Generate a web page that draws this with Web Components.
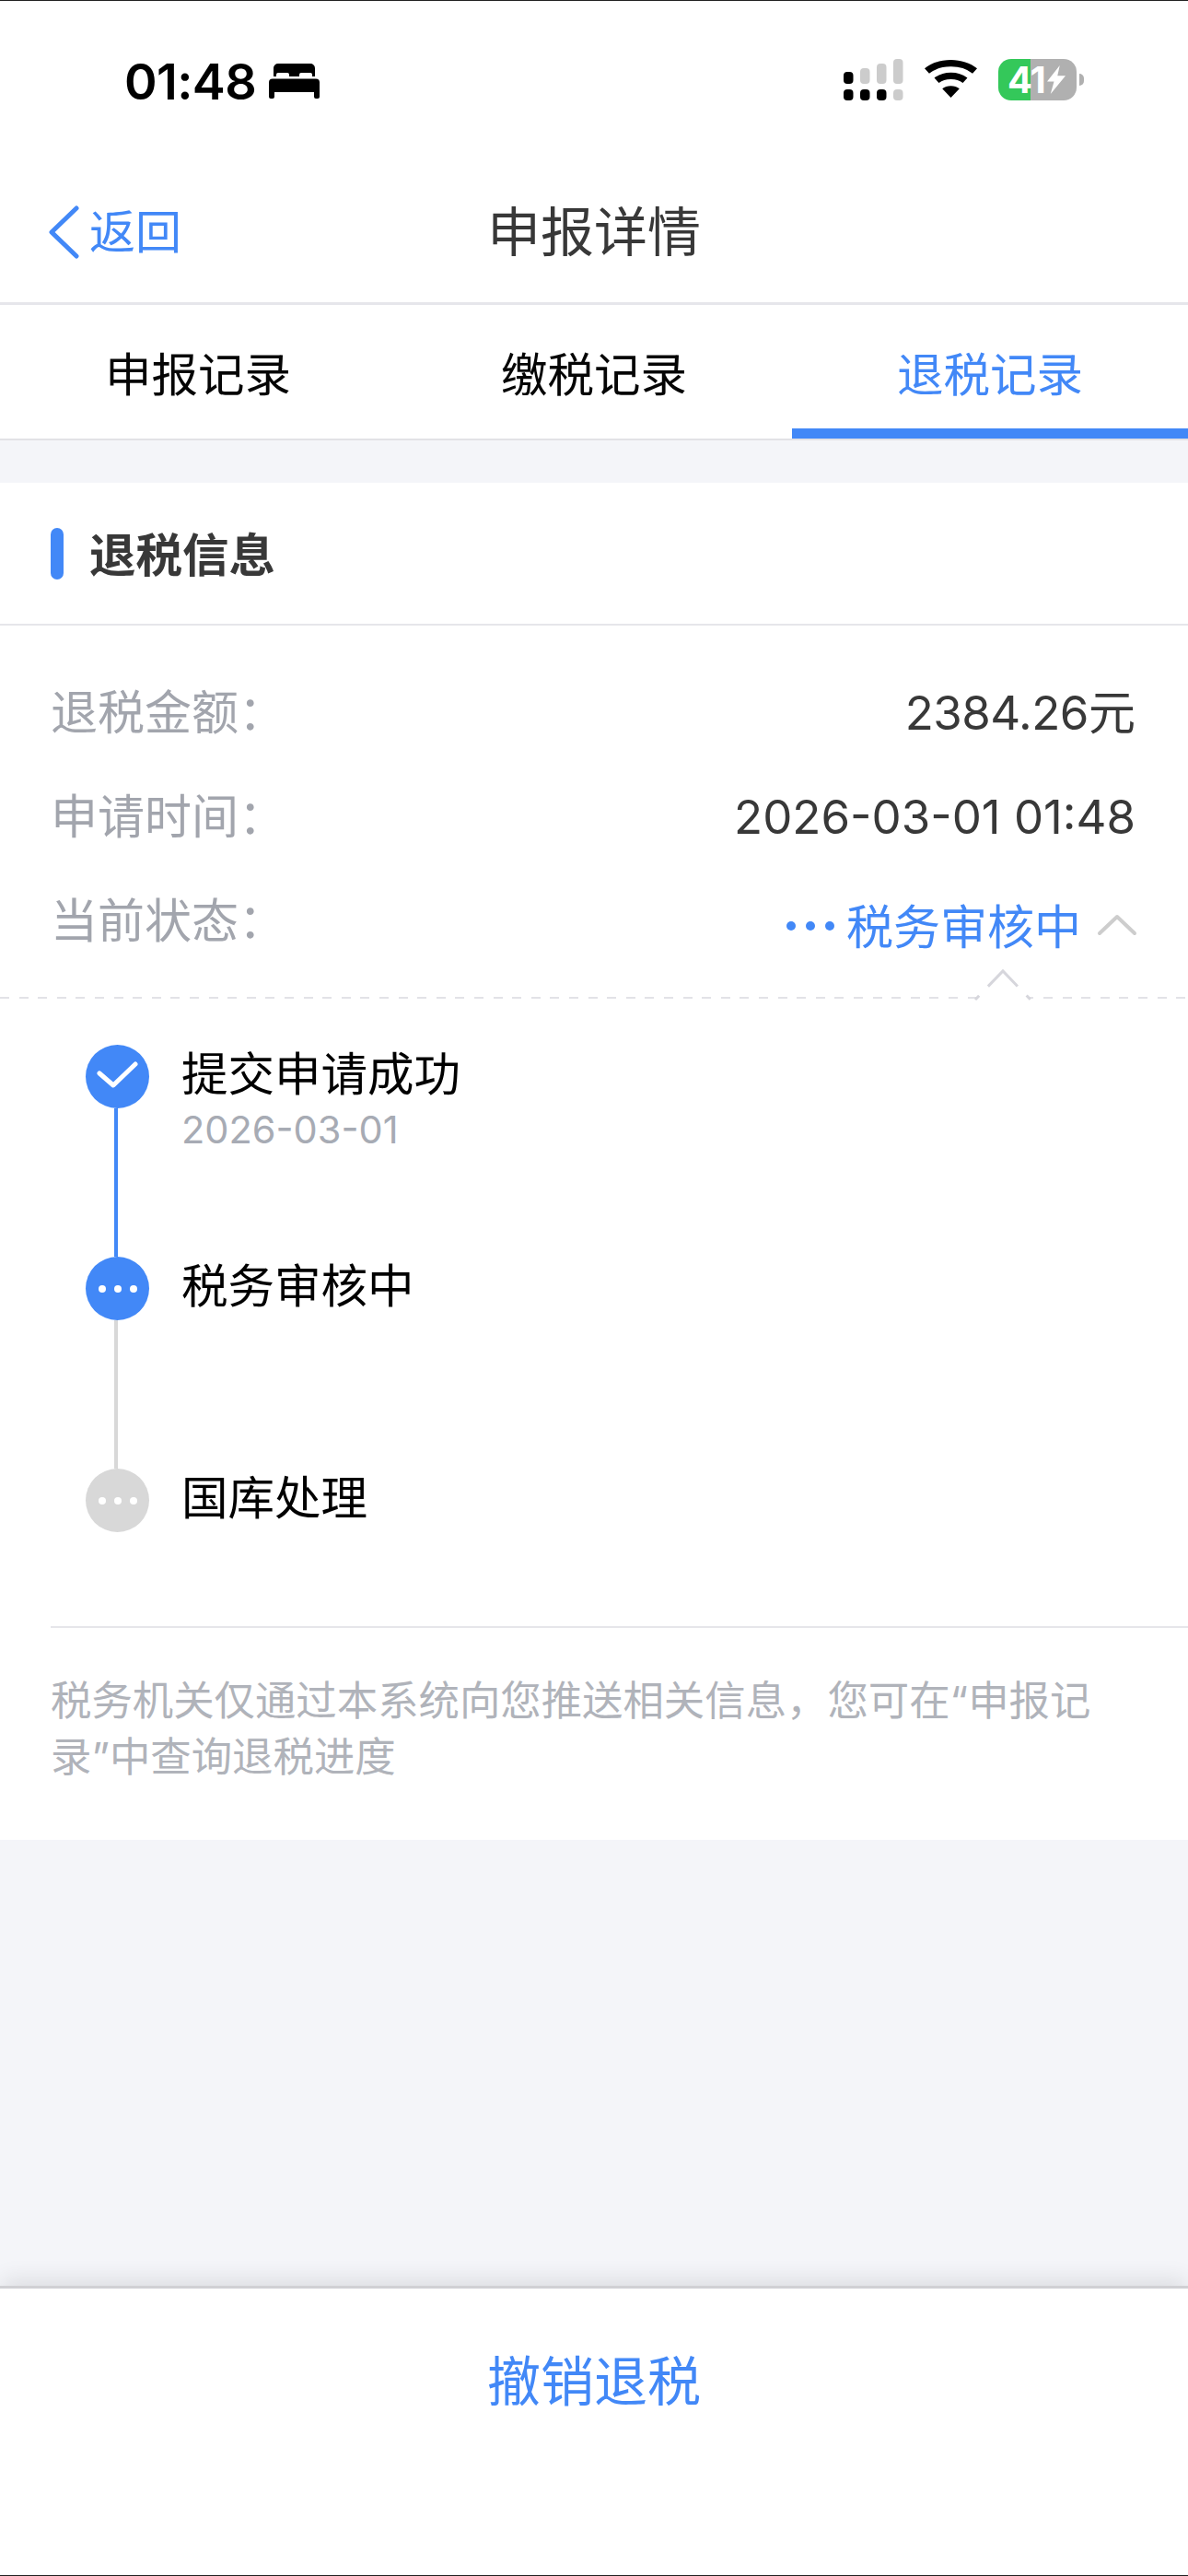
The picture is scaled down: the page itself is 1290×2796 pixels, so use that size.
<!DOCTYPE html>
<html lang="zh"><head><meta charset="utf-8"><title>申报详情</title>
<style>
html,body{margin:0;padding:0;background:#f4f5f9}
body{font-family:Inter,"Noto Sans CJK SC",sans-serif;width:1290px;height:2796px;overflow:hidden}
</style></head>
<body>
<tax-app></tax-app>
<script>
const F='Inter,"Noto Sans CJK SC",sans-serif', BLUE='#4288f7';
function def(name,css,html){
  customElements.define(name,class extends HTMLElement{
    constructor(){super();const r=this.attachShadow({mode:'open'});
      r.innerHTML='<style>'+css+'</style>'+(typeof html==='function'?html(this):html);}
  });
}
def('status-bar',`
:host{display:flex;align-items:flex-start;height:174px;box-sizing:border-box;background:#fff;border-top:1px solid #222;padding:63px 0 0 135px;color:#000}
.t{font:600 54px/50px Inter,sans-serif;letter-spacing:-.6px;width:157px;flex:none}
.bed{margin-top:5px;flex:none}
.r{margin-left:auto;display:flex;align-items:flex-start;padding-right:113px}
.wifi{margin:1px 0 0 23px}
.bat{margin-left:23px;display:flex;width:85px;height:45px;border-radius:14px;background:linear-gradient(90deg,#34c85a 0,#34c85a 35px,#b0b0b0 35px);color:#fff;font:700 40px/45px Inter,sans-serif;align-items:center;padding-left:10px;box-sizing:border-box;letter-spacing:-1px}
.bat svg{margin-left:2px}
.cap{width:5.500px;height:13px;margin:16px 0 0 2.500px;border-radius:0 5px 5px 0;background:#b0b0b0}
`,`<span class="t">01:48</span>
<svg class="bed" width="55" height="38" viewBox="0 0 55 38"><path fill="#000" d="M5 14V5a5 5 0 0 1 5-5h35a5 5 0 0 1 5 5v9h-3v-2a2 2 0 0 0-2-2H35a2 2 0 0 0-2 2v2h-11v-2a2 2 0 0 0-2-2H10a2 2 0 0 0-2 2v2zM4 16.500h47a4 4 0 0 1 4 4V36a2 2 0 0 1-2 2h-2a2 2 0 0 1-2-2v-5H6v5a2 2 0 0 1-2 2H2a2 2 0 0 1-2-2V20.500a4 4 0 0 1 4-4z"/></svg>
<div class="r">
<svg width="65" height="46" viewBox="0 0 65 46"><g fill="#ccc"><rect x="18" y="10" width="10.500" height="17" rx="4"/><rect x="36" y="5" width="10.500" height="22" rx="4"/><rect x="54" y="0" width="10.500" height="27" rx="4"/><rect x="54" y="33" width="10.500" height="12" rx="4"/></g><g fill="#000"><rect x="0" y="14" width="10.500" height="13" rx="4"/><rect x="0" y="33" width="10.500" height="12" rx="4"/><rect x="18" y="33" width="10.500" height="12" rx="4"/><rect x="36" y="33" width="10.500" height="12" rx="4"/></g></svg>
<svg class="wifi" width="57" height="42" viewBox="0 0 46 43" preserveAspectRatio="none"><path fill="#000" d="M23 0c8.800 0 17 3.500 23 9.500l-4 5.500A27 27 0 0 0 23 7.500 27 27 0 0 0 4 15L0 9.500C6 3.500 14.200 0 23 0zM23 14c5.500 0 10.500 2 14.500 6l-4 5.500A15 15 0 0 0 23 21.500a15 15 0 0 0-10.500 4l-4-5.500C12.500 16 17.500 14 23 14zM23 29c3 0 5.500 1 7.500 3L23 42l-7.500-10c2-2 4.500-3 7.500-3z"/></svg>
<div class="bat"><span>41</span><svg width="20" height="31" viewBox="0 0 16 30" preserveAspectRatio="none"><path fill="#fff" d="M11 0 0 17h6L3 30 16 11h-7z"/></svg></div><span class="cap"></span>
</div>`);
def('nav-bar',`
:host{display:grid;grid-template-columns:1fr auto 1fr;align-items:center;height:157px;box-sizing:border-box;background:#fff;border-bottom:3px solid #e6e6eb;font-family:${F}}
.b{display:flex;align-items:center;color:${BLUE};font-size:50px;line-height:60px;padding:2px 0 0 53px}
.b svg{margin-right:11px}
.c{font-size:58px;color:#383838;line-height:70px;margin-top:2px}
`,`<div class="b"><svg width="33" height="58" viewBox="0 0 33 58"><path d="M30 3 3 29l27 26" fill="none" stroke="${BLUE}" stroke-width="5" stroke-linecap="round" stroke-linejoin="round"/></svg><span>返回</span></div><div class="c">申报详情</div><div></div>`);
def('tab-bar',`
:host{display:grid;grid-template-columns:repeat(3,1fr);height:147px;box-sizing:border-box;background:#fff;border-bottom:2px solid #e2e2e6;font:50.500px/60px ${F};color:#050505}
div{display:flex;align-items:center;justify-content:center;padding-top:6px;box-sizing:border-box}
.on{color:${BLUE};border-bottom:11px solid ${BLUE};padding-top:17px}
`,`<div>申报记录</div><div>缴税记录</div><div class="on">退税记录</div>`);
def('section-head',`
:host{display:flex;align-items:center;height:155px;box-sizing:border-box;border-bottom:2px solid #e6e6ea;padding:0 0 0 55px;font:700 50.500px/60px ${F};color:#383838}
i{width:14px;height:56px;border-radius:7px;background:${BLUE};margin-right:28px}
span{padding-top:4px}
`,`<i></i><span><slot></slot></span>`);
def('info-row',`
:host{display:flex;justify-content:space-between;align-items:center;height:113px;box-sizing:border-box;padding:0 57px 0 55px;font:51px/60px ${F};color:#383838}
.k{color:#a2a5ad}
`,`<span class="k"><slot name="k"></slot></span><span><slot></slot></span>`);
def('status-row',`
:host{display:flex;align-items:flex-start;height:141px;box-sizing:border-box;padding:27px 55px 0 55px;font:51px/60px ${F};position:relative;background:repeating-linear-gradient(90deg,#e2e2e7 0 10px,transparent 10px 20.600px) left bottom/100% 2px no-repeat}
.k{color:#a2a5ad}
.v{margin-left:auto;display:flex;align-items:center;color:${BLUE};margin-top:7px}
.dots{margin-right:13px;margin-top:-4px}
.chev{margin-left:17px;margin-top:-6px}
.notch{position:absolute;left:1056px;top:108px;width:66px;height:36px}
`,`<span class="k">当前状态：</span><div class="v"><svg class="dots" width="52" height="10" viewBox="0 0 52 10"><g fill="${BLUE}"><circle cx="5" cy="5" r="5"/><circle cx="26" cy="5" r="5"/><circle cx="47" cy="5" r="5"/></g></svg><span>税务审核中</span><svg class="chev" width="44" height="24" viewBox="0 0 44 24"><path d="M3 21 22 3l19 18" fill="none" stroke="#cdcdcd" stroke-width="4" stroke-linecap="round" stroke-linejoin="round"/></svg></div>
<svg class="notch" viewBox="0 0 66 36"><path d="M0 36 33 2l33 34z" fill="#fff"/><path d="M3 34 33 3l30 31" fill="none" stroke="#d6d6dc" stroke-width="3" stroke-dasharray="6 14 46 14 6 100"/></svg>`);
def('time-step',`
:host{display:flex;height:230px;padding-left:93px;font:50.500px/60px ${F};color:#000}
:host(:last-child){height:171px}
.rail{display:flex;flex-direction:column;align-items:center;width:69px;flex:none}
.dot{width:69px;height:69px;border-radius:50%;flex:none;display:flex;align-items:center;justify-content:center;background:var(--c)}
.line{width:4px;flex:1;background:var(--l,transparent);margin-right:3px}
.body{margin-left:35px;margin-top:2px}
.sub{font-size:41.500px;line-height:46px;color:#a7abb4;margin-top:7px}
`,h=>`<div class="rail"><div class="dot">${h.getAttribute('icon')==='check'
?'<svg width="48" height="34" viewBox="0 0 48 34"><path d="M4 16 19 29 43 6" fill="none" stroke="#fff" stroke-width="5" stroke-linecap="round" stroke-linejoin="round" transform="translate(0 -3)"/></svg>'
:'<svg width="42" height="8" viewBox="0 0 42 8"><g fill="#fff"><circle cx="4" cy="4" r="4"/><circle cx="21" cy="4" r="4"/><circle cx="38" cy="4" r="4"/></g></svg>'}</div><div class="line"></div></div><div class="body"><div><slot></slot></div><div class="sub"><slot name="sub"></slot></div></div>`);
def('note-block',`
:host{display:block;margin:0 0 0 55px;border-top:2px solid #e6e6ea;padding:49px 55px 30px 0;font:44.400px/61px ${F};color:#b0b3ba}
`,`<slot></slot>`);
def('bottom-action',`
:host{display:flex;justify-content:center;padding-top:66px;height:315px;box-sizing:border-box;background:#fff;border-bottom:1px solid #222;border-top:3px solid #d0d0d4;box-shadow:0 -10px 22px -2px rgba(0,0,0,.09);font:58px/70px ${F};color:${BLUE};position:relative}
`,`<slot></slot>`);
def('refund-card',`
:host{display:block;margin-top:46px;background:#fff;height:1473px}
.rows{padding-top:38px}
.tl{padding-top:50px;height:681px;box-sizing:border-box}
`,`<section-head>退税信息</section-head>
<div class="rows"><info-row><span slot="k">退税金额：</span><span style="letter-spacing:-.5px">2384.26</span>元</info-row><info-row><span slot="k">申请时间：</span>2026-03-01 01:48</info-row></div>
<status-row></status-row>
<div class="tl"><time-step icon="check" style="--c:${BLUE};--l:${BLUE}">提交申请成功<span slot="sub">2026-03-01</span></time-step><time-step icon="dots" style="--c:${BLUE};--l:#d8d8d8">税务审核中</time-step><time-step icon="dots" style="--c:#d8d8d8">国库处理</time-step></div>
<note-block>税务机关仅通过本系统向您推送相关信息，您可在“申报记录”中查询退税进度</note-block>`);
def('tax-app',`
:host{display:flex;flex-direction:column;width:1290px;height:2796px;background:#f4f5f9}
.sp{flex:1}
`,`<status-bar></status-bar><nav-bar></nav-bar><tab-bar></tab-bar><refund-card></refund-card><div class="sp"></div><bottom-action>撤销退税</bottom-action>`);
</script>
</body></html>
